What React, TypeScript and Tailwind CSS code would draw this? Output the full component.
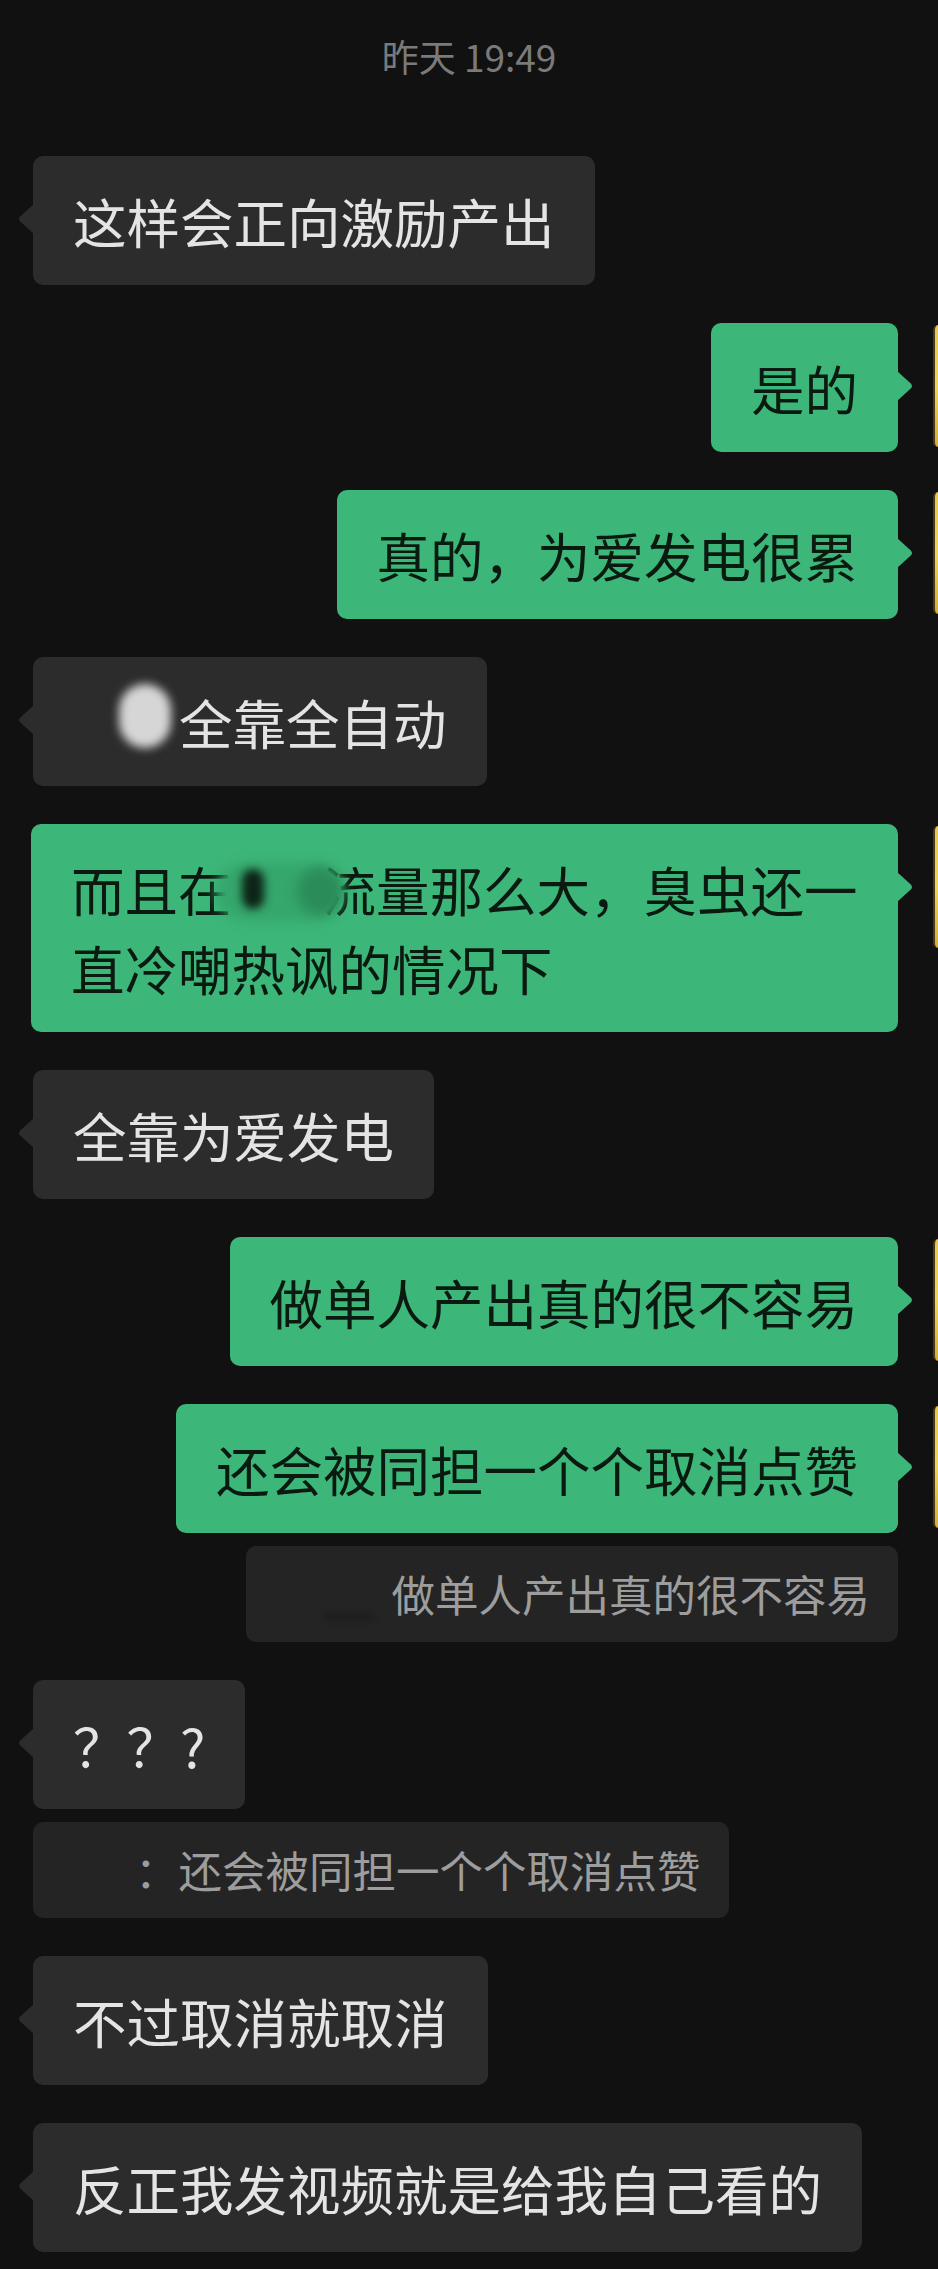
import type { ReactNode } from 'react';

type Side = 'left' | 'right';

function Tail({ side }: { side: Side }) {
    if (side === 'left') {
        return (
            <svg className="absolute left-[-16px] top-[48px] text-[#2c2c2c]" width="17" height="30" viewBox="0 0 17 30">
                <path d="M17 0 L3.5 12.2 Q0.5 15 3.5 17.8 L17 30 Z" fill="currentColor" />
            </svg>
        );
    }
    return (
        <svg className="absolute right-[-16px] top-[48px] text-[#3db679]" width="17" height="30" viewBox="0 0 17 30">
            <path d="M0 0 L13.5 12.2 Q16.5 15 13.5 17.8 L0 30 Z" fill="currentColor" />
        </svg>
    );
}

function Bubble({ side, children, className = '', bubbleClass = '' }: { side: Side; children: ReactNode; className?: string; bubbleClass?: string }) {
    const mine = side === 'right';
    return (
        <div className={`flex items-start ${mine ? 'justify-end' : 'justify-start pl-[33px]'} ${className}`}>
            <div
                className={`relative max-w-[880px] rounded-[10px] px-[40px] py-[25px] text-[53.5px] leading-[79px] ${mine
                    ? 'bg-[#3db679] text-[#0b1a11]'
                    : 'bg-[#2c2c2c] text-[#e4e4e4]'
                    } ${bubbleClass}`}
            >
                {children}
                <Tail side={side} />
            </div>
            {/* avatar, mostly cut off by the screen edge */}
            {mine && (
                <div className="ml-[35px] mt-[2px] h-[122px] w-[5px] shrink-0 rounded-l-[10px] border-l-2 border-[#4a3a10] bg-gradient-to-b from-[#e9c64a] via-[#f2d253] to-[#d9ac34]" />
            )}
        </div>
    );
}

function Quote({ side, children, className = '' }: { side: Side; children: ReactNode; className?: string }) {
    return (
        <div className={`flex ${side === 'right' ? 'justify-end pr-[40px]' : 'justify-start pl-[33px]'} ${className}`}>
            <div className="flex h-[96px] items-center rounded-[10px] bg-[#242424] pl-[28px] pr-[28px] text-[43.5px] leading-[56px] text-[#9d9d9d]">
                {children}
            </div>
        </div>
    );
}

export default function App() {
    return (
        <div className="min-h-[2269px] w-full overflow-hidden bg-[#111111] font-['Noto_Sans_CJK_SC',sans-serif] pt-[36px]">
            <div className="text-center text-[37px] leading-[40px] text-[#7a7a7a]">昨天 19:49</div>

            <div className="flex flex-col">
                <Bubble side="left" className="mt-[80px]">这样会正向激励产出</Bubble>
                <Bubble side="right" className="mt-[38px]">是的</Bubble>
                <Bubble side="right" className="mt-[38px]">真的，为爱发电很累</Bubble>

                <Bubble side="left" className="mt-[38px]">
                    {/* blurred out word */}
                    <span className="relative inline-block h-[79px] w-[106px] align-top">
                        <span className="absolute left-[46px] top-[2px] h-[64px] w-[52px] rounded-[26px] bg-[#d6d6d6] blur-[5px]" />
                    </span>
                    全靠全自动
                </Bubble>

                <Bubble side="right" className="mt-[38px]" bubbleClass="w-[867px]">
                    而且在
                    <span className="relative inline-block h-[79px] w-[91px] align-top">
                        <span className="absolute left-[-16px] top-[14px] h-[58px] w-[126px] rounded-full bg-[#35a66c] blur-[6px]" />
                        <span className="absolute left-[66px] top-[18px] h-[48px] w-[44px] rounded-full bg-[#2b8c5a] blur-[6px]" />
                        <span className="absolute left-[10px] top-[20px] h-[40px] w-[22px] rounded-full bg-[#0d2417] blur-[4px]" />
                    </span>
                    流量那么大，臭虫还一直冷嘲热讽的情况下
                </Bubble>

                <Bubble side="left" className="mt-[38px]">全靠为爱发电</Bubble>
                <Bubble side="right" className="mt-[38px]">做单人产出真的很不容易</Bubble>
                <Bubble side="right" className="mt-[38px]">还会被同担一个个取消点赞</Bubble>
                <Quote side="right" className="mt-[13px]">
                    <span className="relative inline-block h-[56px] w-[118px]">
                        <span className="absolute bottom-[2px] left-[50px] h-[6px] w-[50px] rounded-full bg-[#1c1c1c] blur-[3px]" />
                    </span>
                    做单人产出真的很不容易
                </Quote>

                <Bubble side="left" className="mt-[38px]">？？?</Bubble>
                <Quote side="left" className="mt-[13px]">
                    <span className="inline-block h-[56px] w-[74px]" />
                    ：还会被同担一个个取消点赞
                </Quote>

                <Bubble side="left" className="mt-[38px]">不过取消就取消</Bubble>
                <Bubble side="left" className="mt-[38px]">反正我发视频就是给我自己看的</Bubble>
            </div>
        </div>
    );
}
